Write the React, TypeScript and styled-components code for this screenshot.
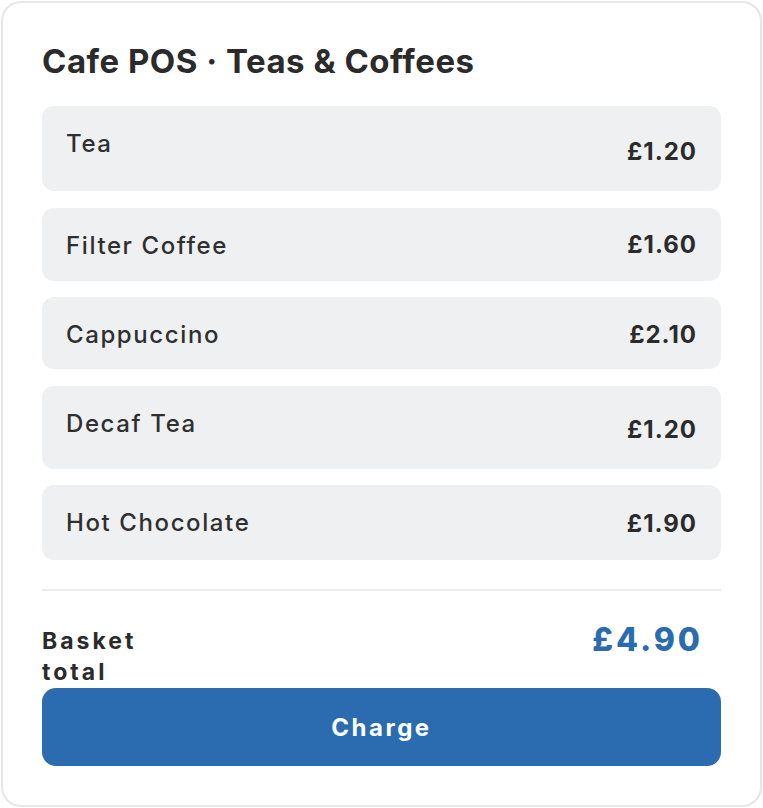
import React from "react";
import styled, { createGlobalStyle } from "styled-components";

const GlobalStyle = createGlobalStyle`
	html, body {
		margin: 0;
		padding: 0;
		background: #ffffff;
	}
	body {
		font-family: "Inter", "Noto Sans", sans-serif;
		color: #2b2b2b;
	}
`;

const Page = styled.div`
	padding: 1px;
	width: 763px;
	height: 808px;
	box-sizing: border-box;
`;

const Card = styled.div`
	box-sizing: border-box;
	height: 806px;
	border: 2px solid #e6e6e6;
	border-radius: 20px;
	background: #ffffff;
	padding: 40px 39px 0 39px;
	display: flex;
	flex-direction: column;
`;

const Title = styled.h1`
	margin: 0 0 27px 0;
	font-size: 33px;
	line-height: 36px;
	font-weight: 700;
	letter-spacing: 0.5px;
	color: #2b2b2b;
`;

const ItemList = styled.div`
	display: flex;
	flex-direction: column;
	gap: 16.5px;
`;

const ItemRow = styled.div<{ $h: number }>`
	display: flex;
	justify-content: space-between;
	align-items: flex-start;
	height: ${p => p.$h}px;
	padding: 0 24px 0 24px;
	background: #eff0f2;
	border-radius: 12px;
	box-sizing: border-box;
`;

const ItemName = styled.span`
	margin-top: 24px;
	font-size: 24px;
	line-height: 28px;
	font-weight: 500;
	letter-spacing: 1.6px;
	color: #2f2f2f;
`;

const ItemPrice = styled.span<{ $top: number }>`
	margin-top: ${p => p.$top}px;
	font-size: 24px;
	line-height: 28px;
	font-weight: 700;
	letter-spacing: 1px;
	color: #2b2b2b;
`;

const Divider = styled.hr`
	margin: 29px 0 0 0;
	border: none;
	height: 2px;
	background: #ececee;
`;

const TotalRow = styled.div`
	display: flex;
	justify-content: space-between;
	align-items: flex-start;
	margin-top: 35px;
`;

const TotalLabel = styled.div`
	width: 110px;
	font-size: 23px;
	line-height: 31px;
	font-weight: 700;
	letter-spacing: 3px;
	color: #2b2b2b;
`;

const TotalAmount = styled.div`
	padding-right: 18px;
	font-size: 32px;
	line-height: 28px;
	font-weight: 800;
	letter-spacing: 3px;
	color: #2b6cb0;
`;

const ChargeButton = styled.button`
	height: 78px;
	border: none;
	border-radius: 14px;
	background: #2b6cb0;
	color: #ffffff;
	font-family: inherit;
	font-size: 24px;
	font-weight: 700;
	letter-spacing: 2.5px;
	cursor: pointer;
`;

const items = [
	{ name: "Tea", price: "£1.20", h: 85, top: 32 },
	{ name: "Filter Coffee", price: "£1.60", h: 73, top: 23 },
	{ name: "Cappuccino", price: "£2.10", h: 72, top: 24 },
	{ name: "Decaf Tea", price: "£1.20", h: 83, top: 30 },
	{ name: "Hot Chocolate", price: "£1.90", h: 75, top: 25 },
];

export default function App() {
	return (
		<>
			<GlobalStyle />
			<Page>
				<Card>
					<Title>Cafe POS · Teas &amp; Coffees</Title>
					<ItemList>
						{items.map(item => (
							<ItemRow key={item.name} $h={item.h}>
								<ItemName>{item.name}</ItemName>
								<ItemPrice $top={item.top}>{item.price}</ItemPrice>
							</ItemRow>
						))}
					</ItemList>
					<Divider />
					<TotalRow>
						<TotalLabel>Basket total</TotalLabel>
						<TotalAmount>£4.90</TotalAmount>
					</TotalRow>
					<ChargeButton>Charge</ChargeButton>
				</Card>
			</Page>
		</>
	);
}
